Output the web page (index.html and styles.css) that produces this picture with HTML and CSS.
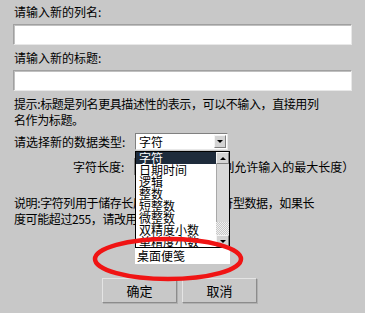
FILE: index.html
```html
<!doctype html>
<html lang="zh-CN">
<head>
    <meta charset="UTF-8" />
    <title>新建列</title>
    <link rel="stylesheet" href="styles.css">
</head>
<body>
    <div class="form">
        <div class="label">请输入新的列名:</div>
        <input class="text-input" type="text">

        <div class="label">请输入新的标题:</div>
        <input class="text-input" type="text">

        <p class="hint">提示:标题是列名更具描述性的表示，可以不输入，直接用列<br>名作为标题。</p>

        <div class="type-row">
            <span class="type-label">请选择新的数据类型:</span>
            <div class="select">
                <span class="select-value">字符</span>
                <span class="select-btn"><i class="arrow-down"></i></span>

                <div class="dropdown">
                    <div class="list">
                        <ul class="options">
                            <li class="selected">字符</li>
                            <li>日期时间</li>
                            <li>逻辑</li>
                            <li>整数</li>
                            <li>短整数</li>
                            <li>微整数</li>
                            <li>双精度小数</li>
                            <li>单精度小数</li>
                        </ul>
                        <div class="scrollbar">
                            <span class="scroll-btn"><i class="arrow-up"></i></span>
                            <span class="scroll-thumb"></span>
                            <span class="scroll-track"></span>
                            <span class="scroll-btn"><i class="arrow-down"></i></span>
                        </div>
                    </div>
                    <div class="extra">桌面便笺</div>
                </div>
            </div>
        </div>

        <div class="length-row">
            字符长度:<input class="len-input" type="text">（该列允许输入的最大长度）
        </div>

        <p class="note">说明:字符列用于储存长度不超过255的字符型数据，如果长<br>度可能超过255，请改用备注类型。</p>

        <div class="actions">
            <button class="btn">确定</button>
            <button class="btn">取消</button>
        </div>
    </div>

    <!-- annotation circled on the screenshot -->
    <svg class="mark" width="156" height="50" viewBox="0 0 156 50">
        <ellipse cx="77" cy="25" rx="73" ry="20" fill="none" stroke="#f01414" stroke-width="4.5" />
    </svg>
</body>
</html>
```

FILE: styles.css
```css
* {
    margin: 0;
    padding: 0;
    box-sizing: border-box;
}

body {
    font-family: "Noto Sans CJK SC", "DejaVu Sans", sans-serif;
    font-size: 12px;
    color: #000;
    background: #c8c8c8;
    position: relative;
    height: 313px;
    overflow: hidden;
}

.form {
    padding: 4px 13px 0;
}

.label {
    line-height: 16px;
    padding-left: 1px;
}

.text-input {
    display: block;
    width: 100%;
    height: 21px;
    margin: 4px 0 5px;
    background: #fff;
    border: 1px solid #a0a0a0;
    border-right-color: #e8e8e8;
    border-bottom-color: #e8e8e8;
    box-shadow: inset 1px 1px 0 #c0c0c0;
}

.hint,
.note {
    line-height: 16px;
    padding-left: 1px;
    letter-spacing: -0.4px;
}

.type-row {
    display: flex;
    align-items: center;
    height: 17px;
    margin-top: 5px;
    padding-left: 1px;
}

.type-label {
    width: 121px;
}

.select {
    position: relative;
    display: flex;
    align-items: center;
    width: 93px;
    height: 17px;
    background: #fff;
    border: 1px solid #808080;
    border-right-color: #e8e8e8;
    border-bottom-color: #e8e8e8;
}

.select-value {
    flex: 1;
    padding-left: 3px;
    line-height: 15px;
}

.select-btn,
.scroll-btn {
    display: flex;
    align-items: center;
    justify-content: center;
    width: 12px;
    height: 13px;
    margin-right: 1px;
    background: #d4d4d4;
    border: 1px solid #f4f4f4;
    border-right-color: #808080;
    border-bottom-color: #808080;
}

.arrow-down,
.arrow-up {
    width: 0;
    height: 0;
    border-left: 3px solid transparent;
    border-right: 3px solid transparent;
}

.arrow-down {
    border-top: 3px solid #000;
}

.arrow-up {
    border-bottom: 3px solid #000;
}

.dropdown {
    position: absolute;
    top: 17px;
    left: -1px;
    width: 95px;
    z-index: 2;
}

.list {
    display: flex;
    height: 97px;
    background: #fff;
    border: 1px solid #000;
    overflow: hidden;
}

.options {
    flex: 1;
    list-style: none;
}

.options li {
    height: 12px;
    line-height: 12px;
    padding-left: 3px;
    white-space: nowrap;
}

.options .selected {
    background: #1e2b3b;
    color: #fff;
}

.scrollbar {
    display: flex;
    flex-direction: column;
    width: 13px;
}

.scrollbar .scroll-btn {
    width: 13px;
    height: 12px;
    margin: 0;
}

.scroll-thumb {
    height: 58px;
    background: #d8d8d8;
    border-left: 1px solid #a8a8a8;
}

.scroll-track {
    flex: 1;
    background-color: #c8c8c8;
    background-image: repeating-conic-gradient(#c8c8c8 0 25%, #f0f0f0 0 50%);
    background-size: 2px 2px;
}

.extra {
    height: 16px;
    line-height: 16px;
    padding-left: 2px;
    background: #fff;
}

.length-row {
    display: flex;
    align-items: center;
    margin-top: 8px;
    padding-left: 60px;
    line-height: 16px;
    white-space: nowrap;
}

.len-input {
    width: 60px;
    height: 17px;
    margin: 0 4px 0 10px;
    background: #fff;
    border: 1px solid #808080;
}

.note {
    margin-top: 20px;
}

.actions {
    display: flex;
    gap: 5px;
    margin-top: 51px;
    padding-left: 89px;
}

.btn {
    width: 75px;
    height: 25px;
    font-family: inherit;
    font-size: 13px;
    background: #c8c8c8;
    border: 1px solid #e4e4e4;
    border-right-color: #8c8c8c;
    border-bottom-color: #8c8c8c;
    box-shadow: 1px 1px 0 #b0b0b0;
}

.mark {
    position: absolute;
    left: 91px;
    top: 234px;
    z-index: 3;
}
```
